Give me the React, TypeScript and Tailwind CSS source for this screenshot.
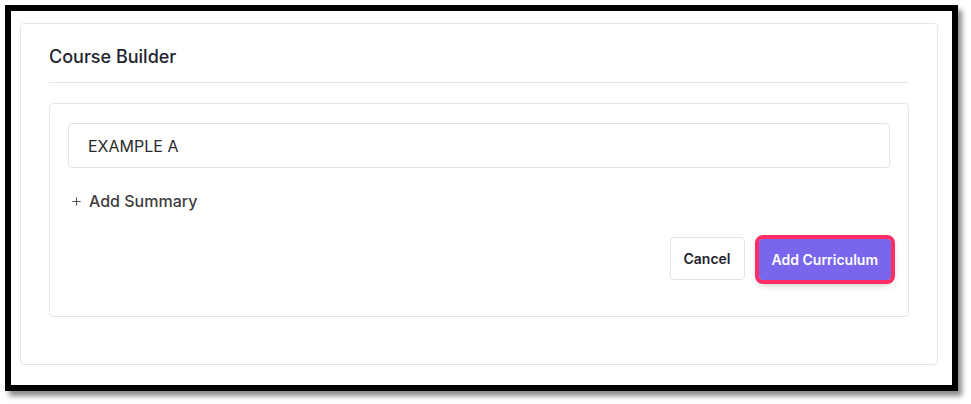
import { Plus } from 'lucide-react';

const App = () => {
  return (
    <div className="w-[971px] h-[404px] bg-white pl-[5px] pt-[5px]" style={{ fontFamily: 'Inter, "Noto Sans", sans-serif' }}>
      {/* Screenshot frame */}
      <div className="w-[953px] h-[386px] border-[6px] border-black bg-white shadow-[4px_5px_5px_rgba(0,0,0,0.45)] pl-[9px] pt-[12px]">
        {/* Card */}
        <div className="w-[918px] h-[342px] border border-[#e6e6e6] rounded-[4px] px-[28px] pt-[19px]">
          <h2 className="text-[18px] leading-[28px] font-medium text-[#1e2330] pb-[11px] border-b border-[#e5e5e5]">
            Course Builder
          </h2>

          {/* Topic box */}
          <div className="mt-[20px] h-[214px] border border-[#e6e6e6] rounded-[4px] px-[18px] pt-[19px]">
            <div className="h-[45px] border border-[#e3e3e3] rounded-[4px] flex items-center px-[19px] text-[16px] text-[#2b2b2b]">
              EXAMPLE A
            </div>

            <button className="mt-[21px] flex items-center gap-[6px] pl-[2px] text-[16px] leading-[24px] font-medium text-[#3d3d3d]">
              <Plus className="w-[13px] h-[13px]" strokeWidth={1.6} />
              Add Summary
            </button>

            <div className="mt-[24px] flex justify-end gap-[14px]">
              <button className="h-[43px] w-[75px] border border-[#e3e3e3] rounded-[4px] bg-white text-[14px] font-semibold text-[#1e2330]">
                Cancel
              </button>
              <button className="h-[41px] mt-[2px] mr-[-1px] px-[13px] rounded-[4px] bg-[#7a66ec] text-white text-[14px] font-semibold outline-[4px] outline-solid outline-[#ff2c66] outline-offset-0 shadow-[0_3px_8px_rgba(0,0,0,0.35)]">
                Add Curriculum
              </button>
            </div>
          </div>
        </div>
      </div>
    </div>
  );
};

export default App;
